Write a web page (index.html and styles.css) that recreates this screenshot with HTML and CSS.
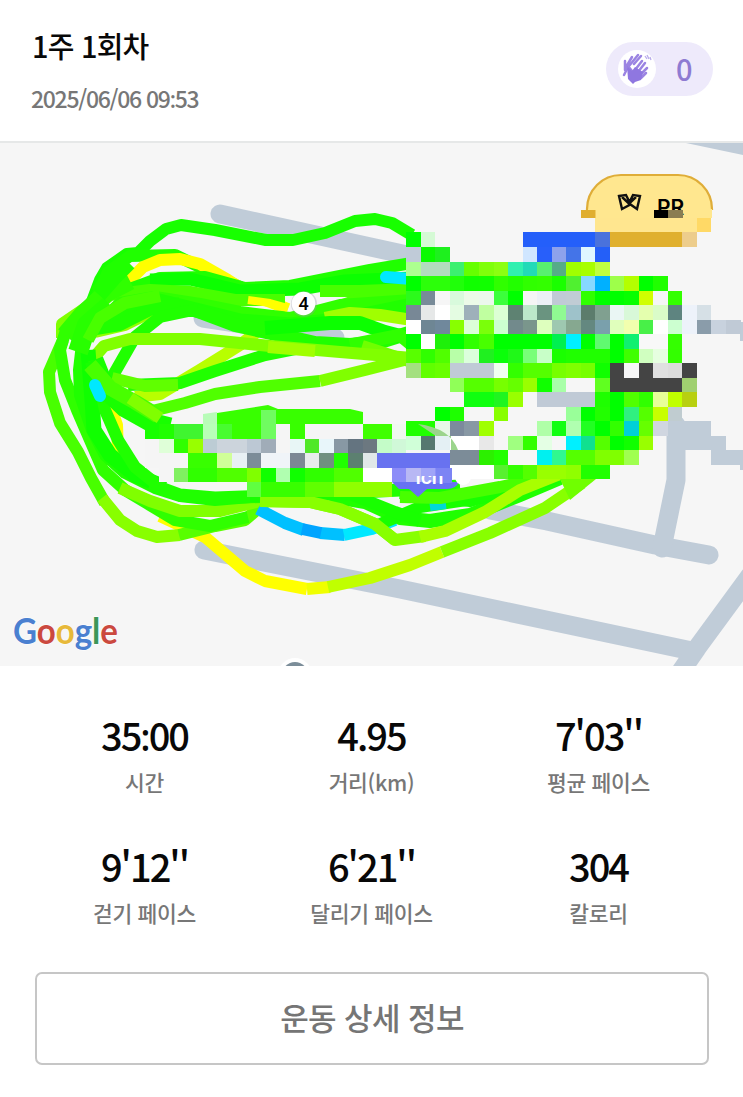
FILE: index.html
```html
<!DOCTYPE html>
<html lang="ko">
<head>
<meta charset="UTF-8">
<meta name="viewport" content="width=device-width, initial-scale=1.0">
<title>1주 1회차</title>
<link rel="stylesheet" href="styles.css">
</head>
<body>

<header class="header">
  <div class="heading">
    <h1 class="title">1주 1회차</h1>
    <div class="date">2025/06/06 09<span class="colon">:</span>53</div>
  </div>
  <div class="claps">
    <span class="clap-icon">
      <svg width="38" height="38" viewBox="0 0 38 38">
        <g fill="none" stroke="#9b84e2" stroke-linecap="round" stroke-width="2.500">
          <path d="M7 20V11M8 17l6-10M11 16l9-11M16 14l7-8M6 25l3-6"/>
          <path d="M14 21l-4-5M17 20l7-9M20 22l7-9M22 25l7-7M23 28l5-5"/>
        </g>
        <path d="M9 16l5 5 3-4 8 5-2 8-6 2-2 2-2-2-3-3z" fill="#8f77e0"/>
        <path d="M27 6l2 3M29 5l2 4M32 7l1 3" stroke="#b9aceb" stroke-width="1.300"/>
      </svg>
    </span>
    <span class="clap-count">0</span>
  </div>
</header>

<div class="map">
  <svg class="map-canvas" width="743" height="523" viewBox="0 143 743 523">
    <!-- roads -->
    <g class="road">
      <path d="M220 214L430 260"/>
      <path d="M203 318L335 338"/>
      <path d="M204 550L400 589L692 651"/>
      <path d="M760 562L697 648L675 680"/>
      <path d="M490 510L547 521L655 545L709 555"/>
      <path d="M662 548L676 480V425" stroke-width="17"/>
    </g>
    <path d="M686 143H743V155z" fill="#c0ccd8"/>
    <path d="M740 322h3v19h-3zM740 451h3v19h-3z" fill="#c0ccd8"/>

    <!-- track, coloured by pace -->
    <g class="track">
      <path stroke="#ffff00" d="M160 516L205 537L245 571L265 581L307 589"/>
      <path stroke="#ffff00" d="M110 405L117 425L118 455L135 475"/>
      <path stroke="#b8ff00" d="M135 397L160 394L200 370L240 345L262 328"/>
      <path stroke="#ffff00" d="M165 515L190 527"/>
      <path stroke="#80ff00" d="M62 338L62 324L90 305"/>
      <path stroke="#90ff00" d="M95 332L125 325L155 310"/>
      <path stroke="#18ff00" d="M85 320L100 280L107 268L127 254L138 253L150 241L166 229L181 225L215 230L266 240L293 240L325 233L355 221L375 219L392 223L412 235"/>
      <path stroke="#20ff00" d="M95 300L108 272L130 256L175 255L200 267L225 280L250 292"/>
      <path stroke="#ffff00" d="M126 284L143 267L160 260L180 259L200 264L228 280L250 294L288 309"/>
      <path stroke="#20ff00" d="M75 330L100 295L130 289L160 278L205 277L245 288L290 286L325 279L370 270L412 263"/>
      <path stroke="#0cff00" stroke-width="13" d="M150 280L190 279L240 291L300 289L345 281L412 278"/>
      <path stroke="#48ff00" d="M75 325L110 295L150 290L190 292L235 300L285 300"/>
      <path stroke="#48ff00" d="M320 291L360 291L412 289"/>
      <path stroke="#48ff00" stroke-width="14" d="M325 312L360 300L412 300"/>
      <path stroke="#30ff00" d="M90 332L120 303L155 297L200 304L240 312L290 318L340 305L412 300"/>
      <path stroke="#20ff00" stroke-width="15" d="M95 325L130 312L155 300L200 311L240 321L290 325L340 320L412 305"/>
      <path stroke="#ffff00" stroke-width="8" d="M248 300L270 303L288 308"/>
      <path stroke="#a0ff00" d="M325 318L350 313L380 315L412 320"/>
      <path stroke="#20ff00" stroke-width="14" d="M160 310L195 310L235 325L280 335L315 343L350 345L380 342L412 332"/>
      <path stroke="#0cff00" stroke-width="14" d="M265 328L330 323L360 323L385 332L412 339"/>
      <path stroke="#30ff00" stroke-width="13" d="M350 345L400 335L412 345"/>
      <path stroke="#20ff00" d="M90 330L120 325L150 310L180 303"/>
      <path stroke="#20ff00" d="M105 395L115 372L135 337L160 317L198 309"/>
      <path stroke="#70ff00" d="M362 346L412 362"/>
      <path stroke="#20ff00" d="M128 385L180 383L215 371L265 355L300 348"/>
      <path stroke="#60ff00" d="M112 378L145 386L178 385"/>
      <path stroke="#50ff00" d="M148 412L185 403L215 394L260 387L320 381"/>
      <path stroke="#80ff00" d="M320 381L365 370L412 358"/>
      <path stroke="#80ff00" d="M90 362L104 346L130 339L200 339L270 346L340 352L412 358"/>
      <path stroke="#a0ff00" d="M268 347L315 351"/>

      <path stroke="#48ff00" d="M63 340L49 372L50 392L60 423L78 452L91 478L105 503"/>
      <path stroke="#88ff00" d="M102 498L120 520L137 531L157 537L180 535"/>
      <path stroke="#58ff00" d="M179 535L215 526L245 520L268 500"/>
      <path stroke="#30ff00" d="M66 330L60 350L65 380L77 410L90 440L103 470L125 490L150 505L175 520L210 526L248 517"/>
      <path stroke="#80ff00" d="M120 488L150 501L180 511L220 511L260 501L310 502L340 509L375 524L395 540"/>
      <path stroke="#20ff00" d="M95 310L83 335L79 370L80 395L92 430L105 455L125 473L155 488L180 496L215 500L260 496"/>
      <path stroke="#10ff00" stroke-width="15" d="M88 350L92 400L94 430L110 455L135 475L165 487"/>
      <path stroke="#20ff00" stroke-width="13" d="M150 484L180 495L215 498L300 495L400 490L460 486"/>
      <path stroke="#20ff00" d="M94 360L105 410L118 440L135 467L155 483"/>
      <path stroke="#18ff00" stroke-width="19" d="M94 360L106 390L125 408L150 422L170 427"/>
      <path stroke="#48ff00" stroke-width="15" d="M90 365L110 388L135 402L158 416"/>
      <path stroke="#80ff00" d="M130 398L160 418"/>
      <path stroke="#30ff00" stroke-width="18" d="M65 335L82 315L105 294L130 281"/>
      <path stroke="#28ff00" stroke-width="20" d="M78 352L87 325L110 305"/>
      <path stroke="#48ff00" d="M88 340L100 318L125 303L160 296"/>
      <path stroke="#20ff00" stroke-width="18" d="M98 294L112 278L128 262"/>

      <path stroke="#20ff00" stroke-width="14" d="M330 496L365 502L400 518L430 521L470 515L520 495L560 478"/>
      <path stroke="#00c0ff" d="M258 509L285 523L304 530"/>
      <path stroke="#00c0ff" d="M320 533L345 535"/>
      <path stroke="#00a4ff" d="M302 529L321 533"/>
      <path stroke="#00e8ff" d="M344 535L372 529L395 520"/>
      <path stroke="#18ff00" d="M378 525L420 507L500 495L560 477"/>
      <path stroke="#18ff00" stroke-width="14" d="M400 492L470 500L520 484"/>
      <path stroke="#18ff00" d="M250 496L350 494L395 512L420 521"/>
      <path stroke="#00d8d8" stroke-width="8" d="M430 507L446 505"/>
      <path stroke="#48ff00" d="M400 497L440 498L500 487L570 472"/>
      <path stroke="#88ff00" d="M260 501L310 502L340 509L375 524L395 540L425 536"/>
      <path stroke="#a8ff00" d="M420 537L445 531L485 512L520 490L560 474"/>
      <path stroke="#f0ff00" d="M307 589L330 587"/>
      <path stroke="#c0ff00" d="M328 587L370 578L410 565L442 552"/>
      <path stroke="#88ff00" d="M442 552L490 533L545 508L582 483"/>
      <path class="slow" stroke="#00e8ff" d="M95 385L100 396"/>
      <path class="slow" stroke="#00e8ff" d="M386 277L412 279"/>
    </g>
    <path d="M560 479H596L570 500z" fill="#70ff00"/>
    <path d="M217 425V413L268 405L278 409L350 409L363 412V425z" fill="#38ff00"/>
    <path d="M203 425V414L217 412V425z" fill="#b8fcb8"/>

    <!-- kilometre marker -->
    <circle cx="304" cy="304" r="13" fill="#99a" opacity=".35"/>
    <circle cx="303.500" cy="303.500" r="11.800" fill="#fff"/>
    <text class="km" x="303.500" y="310" text-anchor="middle">4</text>

    <!-- record badge -->
    <rect x="587" y="175" width="125" height="72" rx="34" fill="#ffe78f" stroke="#dfad38" stroke-width="2.200"/>
    <path d="M580 210h140v40H580z" fill="#f6f6f6"/>
    <path d="M588 209h124v9H588z" fill="#ffe78f"/>
    <path d="M619 196l7-1 3.500 7 3.500-7 7 1-3 13-6.500-4.500L622 209zM622 197l7.500 7M636 197l-7.500 7" fill="none" stroke="#111" stroke-width="2.400"/>
    <text class="record" x="657" y="215">PR</text>
    <path d="M581 210h14.500v8H581z" fill="#e0ae30"/>
    <path d="M654 210h14.500v8H654z" fill="#000"/>
    <path d="M668.500 210H683v8h-14.500z" fill="#8a7d52"/>

    <g id="mosaic" shape-rendering="crispEdges"></g>

    <!-- cafe pin label -->
    <path d="M418 424Q450 428 458 450H451V436H436z" fill="#9bd48c"/>
    <path d="M392 482h67q-3 7-12 7h-20l-9 8-9-8h-10z" fill="#6872f2"/>
    <path d="M436 468h16v15h-16z" fill="#7c84f4"/>
    <svg x="416" y="476" width="40" height="12" viewBox="416 476 40 12">
      <text class="pin-text" x="408" y="484">rich</text>
    </svg>
    <circle cx="463" cy="477" r="8" fill="#fff"/>

    <circle cx="295" cy="675" r="17" fill="#fff"/>
    <circle cx="295" cy="675" r="13" fill="#7b8d99"/>

    <text class="google" x="13" y="644" textLength="105" lengthAdjust="spacingAndGlyphs"><tspan fill="#4a80d0">G</tspan><tspan fill="#cb493f">o</tspan><tspan fill="#e7b93a">o</tspan><tspan fill="#4a80d0">g</tspan><tspan fill="#3c9657">l</tspan><tspan fill="#cb493f">e</tspan></text>
  </svg>
</div>

<section class="stats">
  <div class="stat"><div class="value">35<span class="colon">:</span>00</div><div class="label">시간</div></div>
  <div class="stat"><div class="value">4.95</div><div class="label">거리(km)</div></div>
  <div class="stat"><div class="value">7'03''</div><div class="label">평균 페이스</div></div>
  <div class="stat"><div class="value">9'12''</div><div class="label">걷기 페이스</div></div>
  <div class="stat"><div class="value">6'21''</div><div class="label">달리기 페이스</div></div>
  <div class="stat"><div class="value">304</div><div class="label">칼로리</div></div>
</section>

<button class="detail-button">운동 상세 정보</button>

<script src="mosaic.js"></script>
</body>
</html>
```
FILE: styles.css
```css
body {
  font-family: "Noto Sans CJK KR", sans-serif;
  margin: 0;
  padding: 0;
  background-color: #fff;
  color: #080808;
}
.header {
  display: flex;
  justify-content: space-between;
  box-sizing: border-box;
  height: 143px;
  padding: 26px 30px 0 32px;
  border-bottom: 2px solid #e6e8e8;
}
.title {
  margin: 0;
  font-size: 29px;
  font-weight: 500;
  line-height: 38px;
  letter-spacing: -0.8px;
}
.date {
  margin-top: 18px;
  margin-left: -1px;
  font-size: 23px;
  font-weight: 500;
  line-height: 32px;
  letter-spacing: -1.3px;
  color: #777;
}
/* the Korean font raises its colon, so take a latin one */
.colon {
  font-family: "Noto Sans", sans-serif;
  line-height: 1;
}
.claps {
  display: flex;
  align-items: center;
  box-sizing: border-box;
  width: 107px;
  height: 54px;
  margin-top: 16px;
  padding-left: 12px;
  border-radius: 27px;
  background-color: #eeeafb;
}
.clap-icon {
  width: 38px;
  height: 38px;
  border-radius: 50%;
  background-color: #fff;
}
.clap-icon svg {
  display: block;
}
.clap-count {
  margin-left: 20px;
  font-size: 29px;
  font-weight: 500;
  line-height: 52px;
  height: 54px;
  color: #8e7bd2;
}
.map {
  height: 523px;
  background-color: #f6f6f6;
}
.map-canvas {
  display: block;
}
.road path {
  fill: none;
  stroke: #c0ccd8;
  stroke-width: 19px;
  stroke-linecap: round;
  stroke-linejoin: round;
}
.track {
  fill: none;
  stroke-width: 12px;
  stroke-linejoin: round;
}
.track .slow {
  stroke-linecap: round;
}
.km {
  font-family: Roboto, sans-serif;
  font-size: 18px;
  font-weight: 500;
}
.record {
  font-family: Inter, sans-serif;
  font-size: 21px;
  font-weight: 600;
}
.pin-text {
  font-family: Roboto, sans-serif;
  font-size: 21px;
  font-weight: 500;
  fill: #fff;
}
.google {
  font-family: Lato, sans-serif;
  font-size: 36px;
  font-weight: 700;
  stroke: #fff;
  stroke-width: 1px;
  paint-order: stroke;
}
.stats {
  display: grid;
  grid-template-columns: repeat(3, 227px);
  grid-auto-rows: 131px;
  justify-content: center;
  padding-top: 44px;
  text-align: center;
}
.value {
  height: 50px;
  font-size: 38px;
  font-weight: 500;
  line-height: 50px;
  letter-spacing: -2px;
}
.label {
  margin-top: 6px;
  font-size: 21.5px;
  font-weight: 500;
  line-height: 32px;
  letter-spacing: -0.3px;
  color: #777;
}
.detail-button {
  display: block;
  box-sizing: border-box;
  width: 674px;
  height: 93px;
  margin: 0 0 0 35px;
  padding-bottom: 5px;
  border: 2px solid #c6c6c6;
  border-radius: 7px;
  background-color: #fff;
  font-family: inherit;
  font-size: 31px;
  font-weight: 500;
  letter-spacing: -0.6px;
  color: #757575;
}
```
FILE: mosaic.js
```js
var CELL = 14.53;

// each entry: row, first column, colors ("-" leaves the cell open)
var left = [
  [28, 18, "70fc60"],
  [29, 10, "18ff00 20ff00 40f530 40f530 b8ffb8 48fc30 38ff00 38ff00 70fc60 f5f5f5 38ff00 f5f5f5 f5f5f5 f5f5f5 f5f5f5 40ff00 40ff00 f0f8f0"],
  [30, 10, "f5f5f5 dfffd8 30ff00 98ff00 bcccd4 ccd4dc ccd4dc bcc8d4 a0acb8 f5f5f5 e8f6f6 50e828 e8f6fa 8898a4 647480 6c7880 c4fcc8 d0f8d8"],
  [31, 10, "f5f5f5 f5f5f5 f5f5f5 38ff00 38ff00 d0ff98 e8f0f4 7c8c98 f0f4f8 f0f4f8 7c8894 e8ecec 709080 20ff00 5c8070 e0e8e8 6872f0 6872f0 6872f0 6872f0 6872f0"],
  [32, 11, "f5f5f5 80f060 30ff00 30ff00 50ff00 50ff00 80ff00 10ff00 b0ffb0 10ff00 30ff00 30ff00 50ff00 50ff00 ffffff ffffff 8c8cf8 b8b8f4 a0a4f8 8c90f8"],
  [33, 17, "60ff40 38ff00 38ff00 38ff00 60ff00 60ff00 90ff00 90ff00 90ff00 90ff00"]
];

var right = [
  [15, 41, "ffe68f ffe68f ffe68f ffe68f ffe68f ffe68f ffe68f ffd966"],
  [16, 28, "00ff00 d5fad5 - - - - - - 245ffa 245ffa 245ffa 245ffa 245ffa 4a72dc e0b02e e0b02e e0b02e e0b02e e0b02e edcd8c"],
  [17, 28, "c0cbd8 0bfa00 1ef01e - - - - - d0e6ff 285ffa 8ea2ec 4474e8 dff6ff 245ff8"],
  [18, 28, "adff90 b2dcbe b2dcbe 3cf070 66ff00 80ff0a 8cff10 30f0b0 22dab8 58f070 56ac88 a0ff00 a8ff00 c0ff40"],
  [19, 28, "00ff00 2cff0a 2cff0a 20ff0a 10ff00 11ff00 30ff00 22ff00 30ff00 33ff00 1aff00 50f030 86d8ff 00b0ff 9eff4a b4ff00 00ff00 20ff00"],
  [20, 28, "2cfa1c 788b98 f6f6f6 d8fadc ecfae8 ecf8ec 3cff3c 00ff00 f5f5f5 ecf0f6 c0cad6 c0ccd4 30ff00 00ff00 00ff00 08ff00 d0ff00 f5f5f5 34ff00"],
  [21, 28, "788896 e6e8e8 ffffff e4fce2 9eb0ba c0ffa0 dcffd4 5e8272 bce8ca 6a9480 90fa92 9ec2ca 5c7c6c 80a090 eaf6f4 d8f8d8 e4ffae dafcc8 5e8480 edf2fa d6e0e6"],
  [22, 28, "ffffff 6e8694 70889c 88ff00 dcffd8 7aff0a ccffd0 728a8c 7a968c deffbe 9ec8b0 86a890 648880 7aa0ac e0ffbc f2ffae 48f048 ffffff ccffd0 edf2fa 8a9caa c8d2de c0cad6"],
  [23, 28, "00ff00 ffffff 1ef00a 00ff00 30ff00 48ff00 00ff00 00ff00 00ff00 00ff00 00f050 00f0ff 00ff00 60fa70 00ff00 10f070 f8f8f8 f8f8f8 34ff00"],
  [24, 28, "58ff00 30ff00 50ff00 b8ffa8 dcffdc 20f020 0aff0a 20f818 78ff78 c8ffc8 1aff00 20ff00 20ff00 20ff00 00ff00 40ff00 d0ffc0 e6ffe0 33ff00"],
  [25, 28, "a4e080 60ff00 68ff00 c0cad6 c0cad6 c0cad6 f0fff0 33ff00 55ff00 55ff00 77ff00 80ff00 77ff00 10ff00 444444 f6f6f6 444444 e0e0e0 dcdcdc 444444"],
  [26, 31, "90ff58 55ff00 55ff00 77ff00 66ff00 99ff00 10ff00 a8ffa8 f6f6f6 f6f6f6 60ff20 444444 444444 444444 444444 444444 a0d070"],
  [27, 32, "10ff10 10ff10 20f520 99ff00 f6f6f6 c0cad6 c0cad6 c0cad6 c0cad6 1eff00 00ff00 50ff00 30ff00 e8ff98 c0ff00 b8d010"],
  [28, 30, "00ff00 1eff00 f6f6f6 f6f6f6 88ff00 - - - - 99ff99 00ff00 22ff00 00ff00 30f080 55ff00 c8ff00 c0ccd0"],
  [29, 28, "20ff00 20ff00 e8f8e8 7c8a9c 8898a4 a0ff00 - - - b0ffa8 11ff11 b0ffb0 22ff22 00ff00 33ff00 00d0d8 66ff00 d0d6e0 c0ccd8 c0ccd8 c0ccd8"],
  [30, 28, "d0ffd8 567870 e4f0f4 ffffff ffffff e8e8e8 - a0ff80 33ff00 e4ffe4 f6f6f6 00f0ff 10e090 55ff00 00ff00 11ff00 99ff00 - c0ccd8 c0ccd8 c0ccd8 c0ccd8"],
  [31, 31, "7c8c98 7c8c98 2cf000 22ff00 f6f6f6 f6f6f6 00f0f0 30f890 55ff00 55ff00 80ff00 80ff00 a0ff50 - - c0ccd8 - - c0ccd8 c0ccd8 c0ccd8"],
  [32, 31, "ffffff ffffff ffffff 58f030 33ff00 55ff00 99ff00 99ff00 90ff00 22ff00 22ff00 - - - - c0ccd8"]
];

function drawCells(rows, shift) {
  var mosaic = document.getElementById("mosaic");
  rows.forEach(function (row) {
    row[2].split(" ").forEach(function (color, i) {
      if (color === "-") return;
      var cell = document.createElementNS("http://www.w3.org/2000/svg", "rect");
      var x = Math.floor((row[1] + i) * CELL);
      var y = Math.round(row[0] * CELL + shift);
      cell.setAttribute("x", x);
      cell.setAttribute("y", y);
      cell.setAttribute("width", Math.floor((row[1] + i + 1) * CELL) - x);
      cell.setAttribute("height", Math.round((row[0] + 1) * CELL + shift) - y);
      cell.setAttribute("fill", "#" + color);
      mosaic.appendChild(cell);
    });
  });
}

drawCells(left, 2.8);
drawCells(right, 0);
```
